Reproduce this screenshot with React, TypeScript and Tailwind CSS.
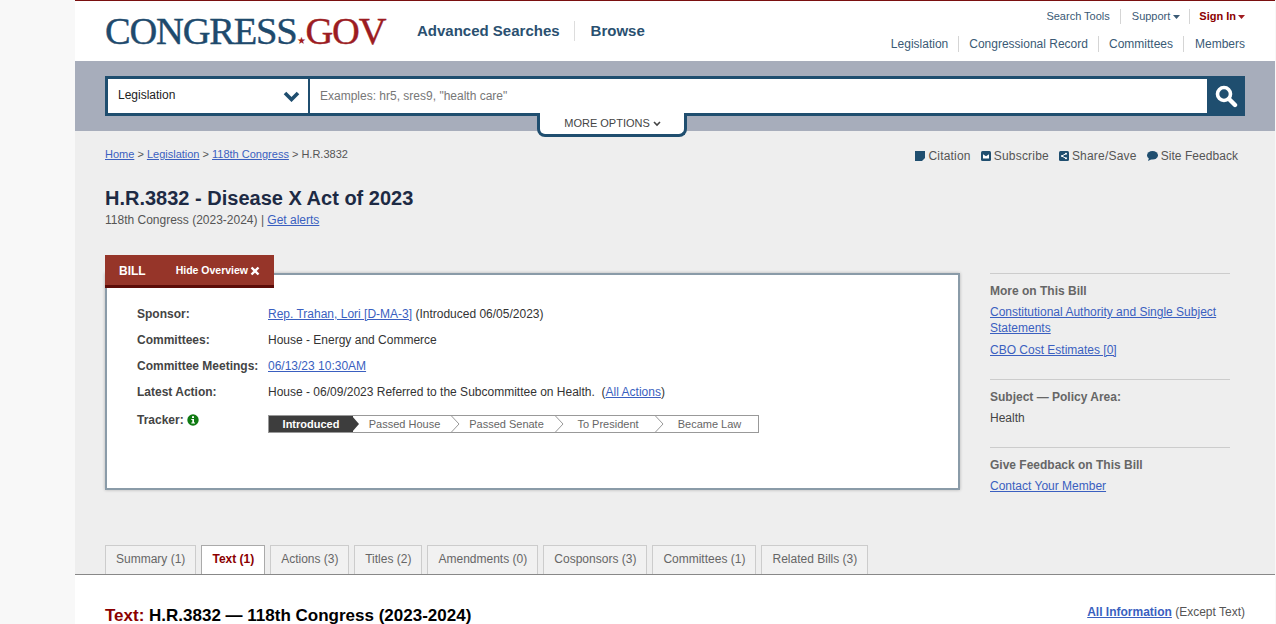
import React from "react";

const A = ({ children, className = "" }: { children: React.ReactNode; className?: string }) => (
  <a href="#" className={"underline text-[#3a5fc0] " + className}>{children}</a>
);

const Caret = ({ color, cls = "ml-[3px]" }: { color: string; cls?: string }) => (
  <svg width="7" height="4" viewBox="0 0 7 4" className={cls}><path d="M0 0h7L3.5 4z" fill={color} /></svg>
);

const Row = ({ label, children }: { label: React.ReactNode; children: React.ReactNode }) => (
  <div className="flex h-[26px] items-center">
    <div className="w-[131px] font-bold text-[#444]">{label}</div>
    <div className="text-[#333]">{children}</div>
  </div>
);

const Step = ({ t, cls }: { t: string; cls: string }) => (
  <div className={"relative h-full flex items-center justify-center text-[#666] " + cls}>
    {t}
    <svg width="9" height="16" viewBox="0 0 9 16" className="absolute right-[-7px] top-0 overflow-visible">
      <path d="M0.5 0L8 8L0.5 16" fill="none" stroke="#999" />
    </svg>
  </div>
);

const Tab = ({ t, active = false, cls = "px-[10px]" }: { t: string; active?: boolean; cls?: string }) => (
  <div className={
    "flex items-center justify-center border pb-[2px] " + cls + " " +
    (active
      ? "bg-white text-[#8b0000] font-bold border-[#aaa] border-b-white h-[30px] -mb-px"
      : "bg-[#f1f1f1] text-[#666] border-[#ccc] border-b-0 h-[29px]")
  }>{t}</div>
);

const SideHead = ({ children }: { children: React.ReactNode }) => (
  <div className="font-bold text-[#666] leading-[16px]">{children}</div>
);

export default function App() {
  return (
    <div className="flex h-[624px] w-[1276px] overflow-hidden bg-white text-[12px] font-['Liberation_Sans',Arial,sans-serif]">
      <div className="w-[75px] shrink-0 bg-[#f8f8f8]" />
      <div className="w-[1200px] shrink-0 flex flex-col">
        {/* Header */}
        <header className="h-[61px] shrink-0 border-t border-[#7a1010] flex justify-between pl-[30px] pr-[30px] bg-white">
          <div className="flex items-start">
            <div className="mt-[8px] font-['Liberation_Serif',serif] text-[38.5px] leading-[44px] tracking-[-1.2px] text-[#1e4a6d] [-webkit-text-stroke:0.4px] whitespace-nowrap flex items-baseline w-[282px]">
              CONGRESS<span className="text-[#a01c20] text-[10px] tracking-normal [-webkit-text-stroke:0px]">★</span><span className="text-[#9c1c22]">GOV</span>
            </div>
            <nav className="flex items-center h-[20px] mt-[20px] ml-[30px] text-[15px] font-bold text-[#2a5070]">
              <span>Advanced Searches</span>
              <span className="w-px h-[20px] bg-[#ddd] ml-[14px] mr-[16px]" />
              <span>Browse</span>
            </nav>
          </div>
          <div className="flex flex-col items-end text-[#3a5a75]">
            <div className="flex items-center h-[15px] mt-[8px] text-[11px]">
              <span>Search Tools</span>
              <span className="w-px h-[15px] bg-[#d5d5d5] ml-[10px] mr-[11px]" />
              <span className="flex items-center">Support<Caret color="#3a5a75" /></span>
              <span className="w-px h-[15px] bg-[#d5d5d5] mx-[9px]" />
              <span className="flex items-center font-bold text-[#8b0000]">Sign In<Caret color="#a01c20" cls="ml-[2px]" /></span>
            </div>
            <div className="flex items-center h-[16px] mt-[12px] text-[12px]">
              <span>Legislation</span>
              <span className="w-px h-[16px] bg-[#d5d5d5] ml-[10px] mr-[10px]" />
              <span>Congressional Record</span>
              <span className="w-px h-[16px] bg-[#d5d5d5] ml-[10px] mr-[10px]" />
              <span>Committees</span>
              <span className="w-px h-[16px] bg-[#d5d5d5] ml-[10px] mr-[11px]" />
              <span>Members</span>
            </div>
          </div>
        </header>

        {/* Search band */}
        <div className="relative h-[70px] shrink-0 bg-[#a7adbb] pl-[30px] pr-[30px] pt-[15px]">
          <div className="flex h-[40px] w-[1140px] bg-[#1f4e6f]">
            <div className="w-[200px] ml-[3px] mt-[3px] h-[34px] bg-white flex items-center justify-between pl-[10px] pr-[8px] pb-[2px] text-[#222]">
              <span>Legislation</span>
              <svg width="17" height="11" viewBox="0 0 17 11" className="mt-[2px]"><path d="M2 2l6.5 6.5L15 2" fill="none" stroke="#1f4e6f" strokeWidth="3.6" /></svg>
            </div>
            <div className="flex-1 ml-[2px] mt-[3px] h-[34px] bg-white flex items-center pl-[10px] text-[#777]">Examples: hr5, sres9, "health care"</div>
            <div className="w-[38px] h-full flex items-center justify-center">
              <svg width="24" height="24" viewBox="0 0 24 24">
                <circle cx="10" cy="10" r="6.5" fill="none" stroke="#fff" strokeWidth="3.6" />
                <path d="M15 15l6 6" stroke="#fff" strokeWidth="4.4" strokeLinecap="round" />
              </svg>
            </div>
          </div>
          <div className="absolute left-[462px] top-[52px] w-[150px] h-[24px] bg-white border-x-[3px] border-b-[3px] border-[#1f4e6f] rounded-b-[8px] flex items-center justify-center pl-[1px] text-[11px] text-[#444]">
            MORE OPTIONS
            <svg width="8" height="6" viewBox="0 0 8 6" className="ml-[3px]"><path d="M1 1l3 3 3-3" fill="none" stroke="#444" strokeWidth="1.6" /></svg>
          </div>
        </div>

        {/* Gray body */}
        <div className="h-[443px] shrink-0 bg-[#eeeeee] flex flex-col pl-[30px]">
          <div className="flex justify-between pt-[16px] pr-[37px] h-[34px]">
            <div className="text-[11px] text-[#555] leading-[15px]">
              <A>Home</A> &gt; <A>Legislation</A> &gt; <A>118th Congress</A> &gt; H.R.3832
            </div>
            <div className="flex items-center gap-[10px] h-[18px] text-[#555] tracking-[0.2px]">
              <span className="flex items-center gap-[3px]">
                <svg width="10" height="10" viewBox="0 0 10 10"><path d="M0 0h10v7l-3 3H0z" fill="#1f4e6f" /></svg>Citation
              </span>
              <span className="flex items-center gap-[3px]">
                <svg width="10" height="10" viewBox="0 0 10 10"><rect width="10" height="10" rx="1.5" fill="#1f4e6f" /><path d="M2 3.2l3 2 3-2V7.4H2z" fill="#fff" /></svg>Subscribe
              </span>
              <span className="flex items-center gap-[3px]">
                <svg width="10" height="10" viewBox="0 0 10 10"><rect width="10" height="10" rx="1.5" fill="#1f4e6f" /><path d="M7 2.5L3 5l4 2.5" fill="none" stroke="#fff" /><circle cx="7" cy="2.7" r="1" fill="#fff" /><circle cx="3" cy="5" r="1" fill="#fff" /><circle cx="7" cy="7.3" r="1" fill="#fff" /></svg>Share/Save
              </span>
              <span className="flex items-center gap-[3px] tracking-[0.05px]">
                <svg width="11" height="10" viewBox="0 0 11 10"><ellipse cx="5.5" cy="4.3" rx="5.5" ry="4.3" fill="#1f4e6f" /><path d="M2 7l-1 3 4-2z" fill="#1f4e6f" /></svg>Site Feedback
              </span>
            </div>
          </div>
          <h1 className="mt-[19px] text-[20px] leading-[28px] font-bold text-[#1d2a44]">H.R.3832 - Disease X Act of 2023</h1>
          <div className="leading-[16px] text-[#555]">118th Congress (2023-2024) | <A>Get alerts</A></div>

          <div className="flex mt-[27px] items-start">
            <div className="relative w-[855px] mt-[18px] h-[217px] bg-white border-2 border-[#8a9ba8] shadow-[0_0_3px_rgba(0,0,0,0.25)] pl-[30px] pt-[26px]">
              <div className="absolute -left-[2px] -top-[20px] w-[169px] h-[33px] bg-[#963529] border-b-[3px] border-[#5c0c08] flex items-center pt-[1px] text-white font-bold">
                <span className="ml-[14px] text-[12px]">BILL</span>
                <span className="ml-[30px] text-[10.5px]">Hide Overview</span>
                <svg width="10" height="10" viewBox="0 0 10 10" className="ml-[2px]"><path d="M1.5 1.5l7 7M8.5 1.5l-7 7" stroke="#fff" strokeWidth="2.4" /></svg>
              </div>
              <Row label="Sponsor:"><A>Rep. Trahan, Lori [D-MA-3]</A> (Introduced 06/05/2023)</Row>
              <Row label="Committees:">House - Energy and Commerce</Row>
              <Row label="Committee Meetings:"><A>06/13/23 10:30AM</A></Row>
              <Row label="Latest Action:">House - 06/09/2023 Referred to the Subcommittee on Health.&nbsp; (<A>All Actions</A>)</Row>
              <div className="flex mt-[2px]">
                <div className="w-[131px] font-bold text-[#444] flex items-center h-[26px] gap-[3px]">
                  Tracker:
                  <svg width="12" height="12" viewBox="0 0 12 12"><circle cx="6" cy="6" r="5.7" fill="#0f7a12" /><rect x="5" y="2.2" width="2" height="1.8" fill="#fff" /><path d="M4.3 5h2.7v3.6h1v1H4.3v-1h1V6h-1z" fill="#fff" /></svg>
                </div>
                <div className="flex items-center h-[18px] w-[491px] mt-[8px] border border-[#999] text-[11px]">
                  <div className="relative w-[84px] h-full bg-[#3d3d3d] text-white font-bold flex items-center justify-center">
                    Introduced
                    <svg width="7" height="16" viewBox="0 0 7 16" className="absolute -right-[6px] top-0"><path d="M0 0l7 8-7 8z" fill="#3d3d3d" /></svg>
                  </div>
                  <Step t="Passed House" cls="w-[100px] pl-[3px]" />
                  <Step t="Passed Senate" cls="w-[104px] pl-[3px]" />
                  <Step t="To President" cls="w-[100px] pl-[2px]" />
                  <div className="flex-1 text-center text-[#666] pl-[4px]">Became Law</div>
                </div>
              </div>
            </div>

            <aside className="w-[240px] ml-[30px] mt-[18px]">
              <div className="border-t border-[#ccc] pt-[9px] h-[106px]">
                <SideHead>More on This Bill</SideHead>
                <div className="mt-[5px] leading-[16px]"><A>Constitutional Authority and Single Subject Statements</A></div>
                <div className="mt-[6px] leading-[16px]"><A>CBO Cost Estimates [0]</A></div>
              </div>
              <div className="border-t border-[#ccc] pt-[9px] h-[68px]">
                <SideHead>Subject — Policy Area:</SideHead>
                <div className="mt-[5px] leading-[16px] text-[#444]">Health</div>
              </div>
              <div className="border-t border-[#ccc] pt-[9px]">
                <SideHead>Give Feedback on This Bill</SideHead>
                <div className="mt-[5px] leading-[16px]"><A>Contact Your Member</A></div>
              </div>
            </aside>
          </div>

          <div className="flex gap-[5px] mt-auto items-end">
            <Tab t="Summary (1)" />
            <Tab t="Text (1)" active cls="w-[64px]" />
            <Tab t="Actions (3)" cls="w-[79px]" />
            <Tab t="Titles (2)" cls="w-[68px]" />
            <Tab t="Amendments (0)" cls="w-[111px]" />
            <Tab t="Cosponsors (3)" />
            <Tab t="Committees (1)" />
            <Tab t="Related Bills (3)" cls="w-[107px]" />
          </div>
        </div>

        {/* Text section */}
        <div className="flex-1 bg-white border-t border-[#888] flex justify-between pl-[30px] pr-[30px] pt-[32px]">
          <h2 className="text-[17px] leading-[18px] font-bold text-black whitespace-nowrap"><span className="text-[#8b0000]">Text:</span> H.R.3832 — 118th Congress (2023-2024)</h2>
          <div className="text-[#555] leading-[14px] -mt-[2px]"><A className="font-bold">All Information</A> (Except Text)</div>
        </div>
      </div>
      <div className="flex-1 bg-[#f8f8f8]" />
    </div>
  );
}
